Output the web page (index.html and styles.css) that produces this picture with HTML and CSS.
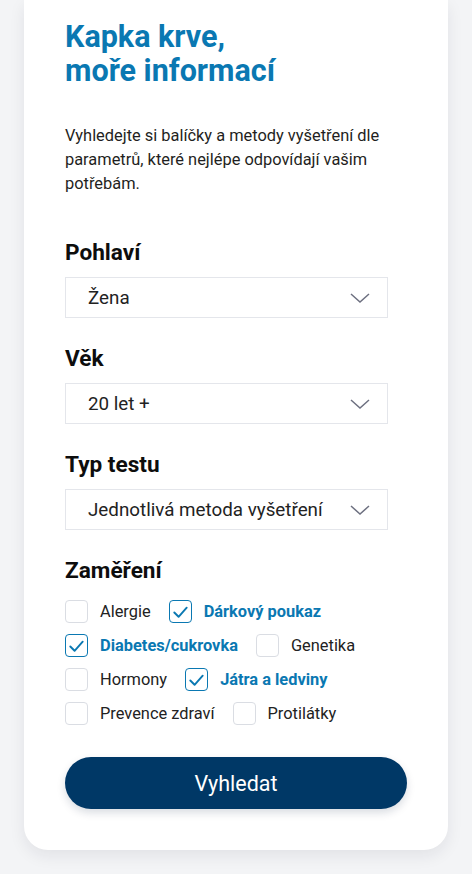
FILE: index.html
```html
<!DOCTYPE html>
<html lang="cs">
<head>
<meta charset="utf-8">
<title>Kapka krve, moře informací</title>
<link rel="stylesheet" href="styles.css">
</head>
<body>
<main class="card">
  <h1 class="title">Kapka krve,<br>moře informací</h1>
  <p class="intro">Vyhledejte si balíčky a metody vyšetření dle parametrů, které nejlépe odpovídají vašim potřebám.</p>

  <section class="field">
    <h2 class="label">Pohlaví</h2>
    <div class="select"><span>Žena</span><svg class="chev" viewBox="0 0 20 10" width="20" height="10"><path d="M1 1 L10 9 L19 1"/></svg></div>
  </section>

  <section class="field">
    <h2 class="label">Věk</h2>
    <div class="select"><span>20 let +</span><svg class="chev" viewBox="0 0 20 10" width="20" height="10"><path d="M1 1 L10 9 L19 1"/></svg></div>
  </section>

  <section class="field">
    <h2 class="label">Typ testu</h2>
    <div class="select"><span>Jednotlivá metoda vyšetření</span><svg class="chev" viewBox="0 0 20 10" width="20" height="10"><path d="M1 1 L10 9 L19 1"/></svg></div>
  </section>

  <section class="field">
    <h2 class="label">Zaměření</h2>
    <div class="checks">
      <div class="row">
        <label class="check"><span class="box"></span><span class="text">Alergie</span></label>
        <label class="check on"><span class="box"><svg viewBox="0 0 22 22" width="22" height="22"><path d="M4.5 11.5 L9 16 L17.5 6.5"/></svg></span><span class="text">Dárkový poukaz</span></label>
      </div>
      <div class="row">
        <label class="check on"><span class="box"><svg viewBox="0 0 22 22" width="22" height="22"><path d="M4.5 11.5 L9 16 L17.5 6.5"/></svg></span><span class="text">Diabetes/cukrovka</span></label>
        <label class="check"><span class="box"></span><span class="text">Genetika</span></label>
      </div>
      <div class="row">
        <label class="check"><span class="box"></span><span class="text">Hormony</span></label>
        <label class="check on"><span class="box"><svg viewBox="0 0 22 22" width="22" height="22"><path d="M4.5 11.5 L9 16 L17.5 6.5"/></svg></span><span class="text">Játra a ledviny</span></label>
      </div>
      <div class="row">
        <label class="check"><span class="box"></span><span class="text">Prevence zdraví</span></label>
        <label class="check"><span class="box"></span><span class="text">Protilátky</span></label>
      </div>
    </div>
  </section>

  <button class="btn" type="button">Vyhledat</button>
</main>
</body>
</html>
```

FILE: styles.css
```css
* { box-sizing: border-box; }
html, body { margin: 0; padding: 0; }
body {
  background: #f3f4f6;
  font-family: Roboto, "Noto Sans", "Liberation Sans", sans-serif;
  color: #1d1d1f;
  padding: 0 24px 24px;
  min-height: 874px;
}
.card {
  background: #fff;
  border-radius: 0 0 24px 24px;
  padding: 20px 41px 41px;
  box-shadow: 0 6px 16px rgba(20, 30, 50, 0.08);
}
.title {
  margin: 0;
  font-size: 30.5px;
  line-height: 34px;
  font-weight: 700;
  color: #0a78b2;
}
.intro {
  margin: 36px 0 0;
  font-size: 16.4px;
  line-height: 24px;
  color: #1f1f22;
}
.field { margin-top: 45px; }
.field + .field { margin-top: 29px; }
.label {
  margin: 0;
  font-size: 22.6px;
  line-height: 24px;
  font-weight: 700;
  color: #0d0d0d;
}
.select {
  margin-top: 12px;
  width: 323px;
  height: 41px;
  border: 1px solid #e4e6eb;
  display: flex;
  align-items: center;
  justify-content: space-between;
  padding: 0 17px 0 22px;
  font-size: 18.8px;
  color: #222;
}
.chev { display: block; flex: none; }
.chev path {
  fill: none;
  stroke: #6d7080;
  stroke-width: 1.5;
}
.checks {
  margin-top: 17px;
  display: flex;
  flex-direction: column;
  gap: 11px;
}
.row {
  display: flex;
  gap: 18px;
}
.check {
  display: flex;
  align-items: center;
  gap: 12px;
  height: 23px;
  font-size: 16.4px;
  color: #222;
}
.box {
  width: 23px;
  height: 23px;
  border: 1px solid #dadde3;
  border-radius: 4px;
  display: flex;
  align-items: center;
  justify-content: center;
  flex: none;
}
.check.on .box { border-color: #0a78b2; }
.check.on .text { color: #0a78b2; font-weight: 700; }
.box svg path {
  fill: none;
  stroke: #0a78b2;
  stroke-width: 2;
  stroke-linecap: round;
  stroke-linejoin: round;
}
.btn {
  display: block;
  margin-top: 32px;
  width: 100%;
  height: 52px;
  border: 0;
  border-radius: 26px;
  background: #003866;
  color: #fff;
  font-family: Roboto, "Noto Sans", "Liberation Sans", sans-serif;
  font-size: 21.5px;
  font-weight: 400;
  box-shadow: 0 4px 8px rgba(0, 30, 60, 0.15);
}
```
